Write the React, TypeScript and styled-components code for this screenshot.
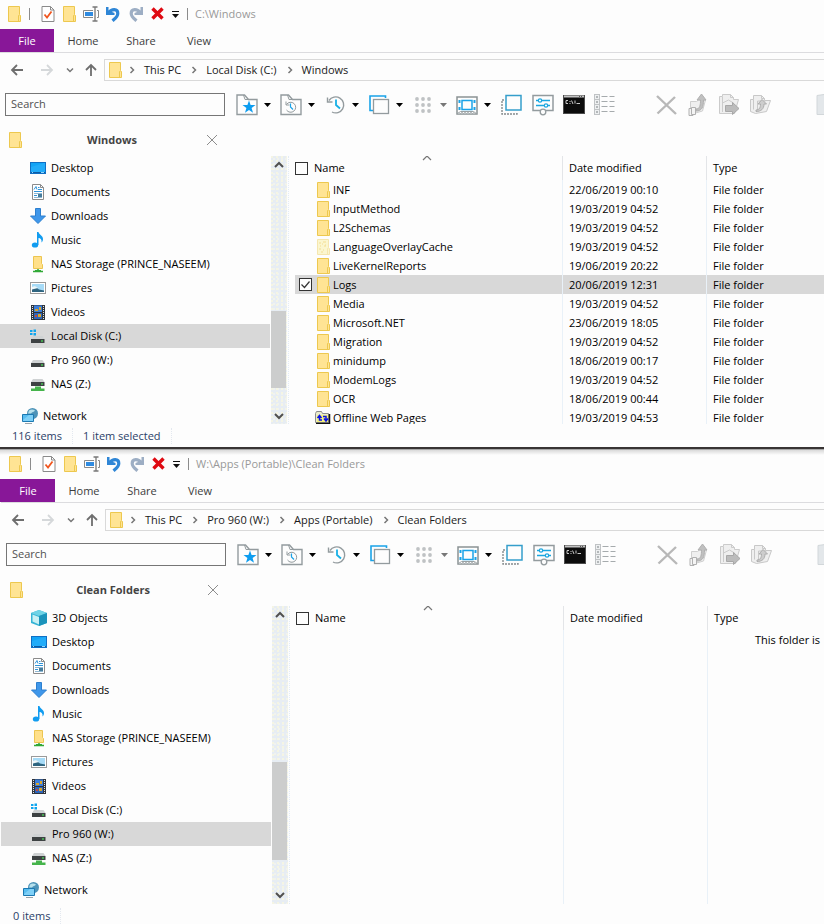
import React from "react";
import styled, { createGlobalStyle } from "styled-components";

const GlobalStyle = createGlobalStyle`
  *, *::before, *::after { box-sizing: border-box; }
  body {
    margin: 0;
    background: #fdfdfd;
    color: #000;
    font-family: "Open Sans", "Noto Sans", sans-serif;
    font-size: 11px;
    line-height: 16px;
  }
  button, input { font: inherit; color: inherit; }
  button { background: none; border: 0; padding: 0; }
  svg { display: block; flex: none; overflow: visible; }
`;

/* ---------- layout ---------- */

const Desktop = styled.main`
  display: flex;
  flex-direction: column;
  height: 100vh;
  overflow: hidden;
`;

const Divider = styled.div`
  flex: none;
  height: 3px;
  border-top: 2px solid #383434;
  background: #a8a8a8;
`;

const Explorer = styled.section<{ $fill?: boolean }>`
  display: flex;
  flex-direction: column;
  flex: ${(p) => (p.$fill ? "1 1 0" : "none")};
  min-height: 0;
  padding-left: ${(p) => (p.$fill ? "1px" : "0")};
  background: ${(p) =>
    p.$fill ? "linear-gradient(#d9d9d9, #fdfdfd 5px)" : "#fdfdfd"};
`;

const TitleBar = styled.header`
  display: flex;
  flex: none;
  align-items: center;
  height: 29px;
  padding: 0 8px 2px;
`;

const QuickButton = styled.button<{ $gap: number }>`
  margin-right: ${(p) => p.$gap}px;
`;

const Separator = styled.span<{ $gap: number }>`
  width: 1px;
  height: 12px;
  margin-right: ${(p) => p.$gap}px;
  background: #8c8c8c;
`;

const WindowTitle = styled.h1`
  margin: 0;
  color: #999;
  font-size: 11px;
  font-weight: 400;
`;

const Ribbon = styled.nav`
  display: flex;
  flex: none;
  height: 24px;
  border-bottom: 1px solid #dcdcdf;
`;

const RibbonTab = styled.button<{ $file?: boolean }>`
  width: ${(p) => (p.$file ? "54px" : "58px")};
  color: ${(p) => (p.$file ? "#fff" : "#3c3c3c")};
  background: ${(p) => (p.$file ? "#881798" : "none")};
  box-shadow: ${(p) => (p.$file ? "-1px 0 #881798" : "none")};
`;

const NavRow = styled.div`
  display: flex;
  flex: none;
  align-items: center;
  height: 34px;
  padding-left: 10px;
`;

const NavButton = styled.button<{ $gap: number }>`
  margin-right: ${(p) => p.$gap}px;
`;

const AddressBar = styled.div`
  display: flex;
  flex: 1;
  align-items: center;
  gap: 7px;
  height: 22px;
  padding-left: 4px;
  border: 1px solid #d9d9d9;
  border-right: 0;
`;

const Crumbs = styled.ol`
  display: flex;
  margin: 0;
  padding: 0;
  list-style: none;
`;

const Crumb = styled.li`
  display: flex;
  align-items: center;
  gap: 9px;
  padding-right: 10px;
`;

const CrumbLink = styled.a`
  color: #1a1a1a;
  text-decoration: none;
  white-space: nowrap;
`;

const ToolRow = styled.div`
  display: flex;
  flex: none;
  align-items: center;
  height: 35px;
  padding-left: 5px;
  overflow: hidden;
`;

const SearchBox = styled.input`
  flex: none;
  width: 220px;
  height: 23px;
  margin-right: 11px;
  padding: 0 5px 2px;
  border: 1px solid #767676;
  border-radius: 0;
  background: #fdfdfd;
  outline: 0;
  &::placeholder { color: #505050; opacity: 1; }
`;

const SplitTool = styled.button`
  display: flex;
  flex: none;
  align-items: center;
  gap: 4px;
  width: 44px;
`;

const Tool = styled.button`
  flex: none;
  width: 31px;
`;

const ToolGap = styled.span<{ $wide?: boolean }>`
  flex: none;
  width: ${(p) => (p.$wide ? "37px" : "31px")};
`;

const FolderTab = styled.div`
  display: flex;
  flex: none;
  align-items: center;
  width: 226px;
  height: 34px;
  padding: 2px 9px 0 9px;
`;

const FolderTabTitle = styled.h2`
  flex: 1;
  margin: 0;
  padding-right: 5px;
  color: #444;
  font-size: 11px;
  font-weight: 700;
  text-align: center;
`;

const Body = styled.div<{ $fill?: boolean }>`
  display: grid;
  grid-template-columns: 270px 18px 1fr;
  gap: 0 1px;
  flex: ${(p) => (p.$fill ? "1 1 0" : "none")};
  min-height: 0;
  height: ${(p) => (p.$fill ? "auto" : "268px")};
`;

const Tree = styled.ul`
  margin: 0;
  padding: 0;
  list-style: none;
  overflow: hidden;
`;

const TreeItem = styled.li<{ $root?: boolean; $selected?: boolean }>`
  display: flex;
  align-items: center;
  gap: 5px;
  height: 24px;
  margin-top: ${(p) => (p.$root ? "8px" : "0")};
  padding-left: ${(p) => (p.$root ? "22px" : "30px")};
  background: ${(p) => (p.$selected ? "#d8d8d8" : "transparent")};
`;

const ScrollBar = styled.div`
  display: flex;
  flex-direction: column;
  padding-right: 1px;
  border-right: 1px dotted #e3ecf5;
`;

const Track = styled.div`
  display: flex;
  flex: 1;
  flex-direction: column;
  background:
    radial-gradient(circle at 1px 1px, #f5f5e4 1px, transparent 1px) 0 0 / 5px 4px,
    radial-gradient(circle at 1px 1px, #f1f3ee 1px, transparent 1px) 2px 2px / 4px 5px,
    #e7edf3;
`;

const ScrollButton = styled.button`
  display: flex;
  flex: none;
  align-items: center;
  justify-content: center;
  height: 17px;
`;

const ScrollSpace = styled.span<{ $grow: number }>`
  flex: ${(p) => p.$grow} 1 0;
`;

const Thumb = styled.div<{ $grow: number }>`
  flex: ${(p) => p.$grow} 1 0;
  margin-right: 1px;
  background: #cccdcd;
`;

const ListPane = styled.div`
  display: flex;
  flex-direction: column;
  min-width: 0;
  padding-left: 5px;
  overflow: hidden;
`;

const FileTable = styled.table`
  width: 100%;
  flex: none;
  border-collapse: separate;
  border-spacing: 0;
  table-layout: fixed;
`;

const HeadCell = styled.th<{ $width?: number }>`
  position: relative;
  width: ${(p) => (p.$width ? `${p.$width}px` : "auto")};
  height: 24px;
  padding: 0 0 0 6px;
  border-left: 1px solid #e3e5e8;
  font-weight: 400;
  text-align: left;
  &:first-child { padding: 0; border-left: 0; }
`;

const SortMark = styled.span`
  position: absolute;
  top: -2px;
  left: 128px;
`;

const Row = styled.tr<{ $selected?: boolean }>`
  background: ${(p) => (p.$selected ? "#d8d8d8" : "transparent")};
`;

const Cell = styled.td`
  height: 19px;
  padding: 0 0 0 6px;
  border-left: 1px solid #e9f1f8;
  white-space: nowrap;
  &:first-child { padding: 0 0 0 4px; border-left: 0; }
`;

const NameBox = styled.label`
  display: flex;
  align-items: center;
`;

const Check = styled.input<{ $hidden?: boolean; $gap: number }>`
  appearance: none;
  flex: none;
  width: 13px;
  height: 13px;
  margin: 0 ${(p) => p.$gap}px 0 0;
  border: 1px solid #333;
  background: #fdfdfd;
  opacity: ${(p) => (p.$hidden ? 0 : 1)};
  &:checked {
    background: #fdfdfd
      url("data:image/svg+xml,%3Csvg xmlns='http://www.w3.org/2000/svg' viewBox='0 0 11 11'%3E%3Cpath d='M1.5 5.5l3 3 5-6' fill='none' stroke='%23333' stroke-width='1.2'/%3E%3C/svg%3E");
  }
`;

const IconSlot = styled.span`
  display: flex;
  justify-content: flex-end;
  width: 15px;
  margin-right: 3px;
`;

const EmptyArea = styled.div`
  display: grid;
  flex: 1;
  grid-template-columns: 267px 144px 1fr;
`;

const EmptyColumn = styled.div`
  border-left: 1px solid #e9f1f8;
  &:first-child { border-left: 0; }
`;

const EmptyNote = styled.p`
  margin: 2px 0 0 47px;
  white-space: nowrap;
`;

const StatusBar = styled.footer<{ $fill?: boolean }>`
  display: flex;
  flex: none;
  height: ${(p) => (p.$fill ? "20px" : "23px")};
  padding: 4px 0 0 12px;
  color: #2c3f68;
`;

const StatusItem = styled.span`
  height: 16px;
  margin-right: 10px;
  padding-right: 10px;
  border-right: 1px dotted #e3e8ef;
`;

/* ---------- icons ---------- */

const FolderIcon = ({ faded = false }: { faded?: boolean }) => (
  <svg width="13" height="16" viewBox="0 0 13 16">
    <path d="M.5.5h11v8l1 1v6H.5z" fill={faded ? "#fbf6cf" : "#ffe494"} stroke={faded ? "#f5e6ae" : "#edc84f"} />
    <path d="M10.5 15.5V9.5h1" fill="none" stroke={faded ? "#f5e6ae" : "#edc84f"} />
    {faded && <path d="M2 4h2m2-1h3M3 7h1m3 0h2M2 10h2m2 1h1M4 13h2m2-7h1M5 5h1" stroke="#f3dd92" />}
  </svg>
);

const PropertiesIcon = () => (
  <svg width="14" height="16" viewBox="0 0 14 16">
    <path d="M1 .5h8.500l3.500 3.500v11.500H1z" fill="#fff" stroke="#8a8a8a" />
    <path d="M9.500.5v3.500H13" fill="none" stroke="#8a8a8a" />
    <path d="M3.500 8.500l2.500 3 4.500-6" fill="none" stroke="#f0561f" strokeWidth="1.800" />
  </svg>
);

const RenameIcon = () => (
  <svg width="16" height="16" viewBox="0 0 16 16">
    <path d="M10 4.500H.5v7H10M14 4.500h1.500v7H14" fill="none" stroke="#888" />
    <rect x="2" y="6" width="8" height="4" fill="#2e8ae0" />
    <path d="M9.500 1h5M9.500 15h5M12 1v14" fill="none" stroke="#777" strokeWidth="1.300" />
  </svg>
);

const TurnIcon = ({ color, flip = false }: { color: string; flip?: boolean }) => (
  <svg width="14" height="16" viewBox="0 0 14 16">
    <g transform={flip ? "translate(14 0) scale(-1 1)" : undefined}>
      <path d="M3 6.500C5.500 2.800 11.800 2.300 11.800 7.500c0 3.200-2.600 5-5.300 7.300" fill="none" stroke={color} strokeWidth="3.200" />
      <path d="M0 1h2.500v3.500L8.500 7v2H0z" fill={color} />
    </g>
  </svg>
);

const RedCross = () => (
  <svg width="13" height="13" viewBox="0 0 13 13">
    <path d="M1.500 1.500l10 10M11.500 1.500l-10 10" stroke="#df0a12" strokeWidth="3.400" />
  </svg>
);

const MoreIcon = () => (
  <svg width="7" height="8" viewBox="0 0 7 8">
    <path d="M0 1.500h7" stroke="#111" />
    <path d="M0 4h7L3.500 8z" fill="#111" />
  </svg>
);

const ArrowIcon = ({ kind }: { kind: "left" | "right" | "up" }) => {
  const turn = { left: 0, up: 90, right: 180 }[kind];
  return (
    <svg width="14" height="14" viewBox="0 0 14 14">
      <path
        d="M13 7H2M7 2L2 7l5 5"
        fill="none"
        stroke={kind === "right" ? "#d5d8da" : "#6e6e6e"}
        strokeWidth="1.800"
        transform={`rotate(${turn} 7 7)`}
      />
    </svg>
  );
};

const Chevron = ({ dir, size = 6, color = "#777", width = 1.5 }: { dir: "right" | "down" | "up"; size?: number; color?: string; width?: number }) => {
  const turn = { right: 0, down: 90, up: -90 }[dir];
  return (
    <svg width={size} height={size} viewBox="0 0 6 6">
      <path d="M1.500 0l3 3-3 3" fill="none" stroke={color} strokeWidth={width} transform={`rotate(${turn} 3 3)`} />
    </svg>
  );
};

const Caret = ({ color = "#000" }: { color?: string }) => (
  <svg width="7" height="4" viewBox="0 0 7 4">
    <path d="M0 0h7L3.500 4z" fill={color} />
  </svg>
);

const CloseIcon = () => (
  <svg width="10" height="10" viewBox="0 0 10 10">
    <path d="M0 0l10 10M10 0L0 10" stroke="#8d8d8d" />
  </svg>
);

type ToolName =
  | "favourite" | "recent" | "history" | "copies" | "grid" | "slides"
  | "select" | "options" | "terminal" | "details"
  | "delete" | "moveUp" | "moveTo" | "copyTo" | "paste";

const folderOutline = "M1 21.500V2h7.500l4 4.500h8.500v15z";
const blue = "#1aa3e8";
const steel = "#939b9e";

const toolArt: Record<ToolName, React.ReactNode> = {
  favourite: (
    <>
      <path d={folderOutline} fill="none" stroke={steel} strokeWidth="1.400" />
      <path d="M7.500 2l1.500 4.500h4" fill="none" stroke={steel} />
      <path d="M13 7.500l1.600 4.500h4.900l-3.900 3 1.400 4.800-4-2.900-4 2.900 1.400-4.800-3.900-3h4.900z" fill="#0d9df0" />
    </>
  ),
  recent: (
    <>
      <path d={folderOutline} fill="none" stroke={steel} strokeWidth="1.400" />
      <path d="M7.500 2l1.500 4.500h4" fill="none" stroke={steel} />
      <path d="M6.500 11.500a5 5 0 1 1 0 5.500M6 8.500v3.500h3.500" fill="none" stroke={steel} />
      <path d="M10.500 10.500V14l2.500 2.500" fill="none" stroke={blue} strokeWidth="1.200" />
    </>
  ),
  history: (
    <>
      <path d="M5 7.500a8 8 0 1 1 3 11.500M3.500 4.500V9h5" fill="none" stroke={steel} strokeWidth="1.400" />
      <path d="M12 6.500V12l4 3.500" fill="none" stroke="#18b0e6" strokeWidth="1.800" />
    </>
  ),
  copies: (
    <>
      <path d="M17.500 5V3H2v14.500h3" fill="none" stroke={blue} strokeWidth="1.600" />
      <rect x="5.500" y="6.500" width="15" height="14" fill="#fdfdfd" stroke={steel} strokeWidth="1.300" />
    </>
  ),
  grid: (
    <g fill="#bfc2c4">
      {[6, 12, 18].map((y) => [5, 11, 17, 17].map((x, i) => i < 3 && <circle key={`${x}-${y}`} cx={x} cy={y} r="1.900" />))}
    </g>
  ),
  slides: (
    <>
      <rect x="1" y="4" width="20" height="17" fill="none" stroke="#8b9294" strokeWidth="1.500" />
      <path d="M1 21l3.500-2.500h13L21 21" fill="none" stroke="#9ba1a3" />
      <path d="M2 20h18" stroke="#b9bec0" strokeWidth="2" strokeDasharray="2 1" />
      <rect x="6" y="7.500" width="10" height="9" fill="#fdfdfd" stroke={blue} strokeWidth="1.500" />
      <path d="M3.500 7v3m0 4v3m15-10v3m0 4v3" stroke={blue} strokeWidth="2" />
    </>
  ),
  select: (
    <>
      <path d="M4 7H2v14h15v-2" fill="none" stroke="#858b8d" strokeDasharray="2 1" strokeWidth="1.400" />
      <rect x="6" y="2.500" width="15" height="14.500" fill="#fdfdfd" stroke="#359ecb" strokeWidth="1.500" />
    </>
  ),
  options: (
    <>
      <path d="M9 17.500H2V2.500h20v15h-7" fill="none" stroke={steel} strokeWidth="1.500" />
      <circle cx="12" cy="19" r="2.800" fill="#fdfdfd" stroke={steel} strokeWidth="1.300" />
      <path d="M5 7.500h14M5 12.500h14" stroke="#19a6e0" strokeWidth="1.500" />
      <circle cx="9" cy="7.500" r="1.700" fill="#fdfdfd" stroke="#19a6e0" strokeWidth="1.200" />
      <circle cx="15" cy="12.500" r="1.700" fill="#fdfdfd" stroke="#19a6e0" strokeWidth="1.200" />
    </>
  ),
  terminal: (
    <>
      <rect x="1.500" y="2.500" width="21" height="18" fill="#0c0c0c" stroke="#4c4c4c" />
      <path d="M2 3.500h20" stroke="#c4c4c4" strokeWidth="2" />
      <path d="M17 3.500h1m1 0h1" stroke="#555" />
      <path d="M6 7.500H4v3h2M8 8v1m0 1v1M9.500 7.500l1.500 3.500M13 7.500v3M14.500 10.500H18" fill="none" stroke="#c8c8c8" />
    </>
  ),
  details: (
    <>
      <rect x="1.500" y="1.500" width="5" height="20" fill="#eef0f1" stroke="#c0c3c5" />
      {[4, 9, 14, 19].map((y) => (
        <React.Fragment key={y}>
          <rect x="3" y={y - 1} width="2" height="2" fill="#b4b8ba" />
          <path d={`M1.500 ${y + 2.5}h5`} stroke="#c0c3c5" />
          <path d={`M8.500 ${y - 0.5}h6m2 0h5`} stroke="#a6abad" />
        </React.Fragment>
      ))}
    </>
  ),
  delete: <path d="M2 3l19 18M20 4L2.500 20.500" stroke="#b8b8b8" strokeWidth="2.400" />,
  moveUp: (
    <g stroke="#cfcfcf">
      <path d="M4.500 8.500h6l2-1.500h7l-3 11-7 2h-5z" fill="#efefef" />
      <path d="M10 16c4 0 4.500-4 4.500-9H11l4.500-6L20 7h-2.500c0 7-1.500 11-7.500 11z" fill="#c0c0c0" stroke="#b0b0b0" />
      <path d="M3 15.500h4v7H3z" fill="#f4f4f4" stroke="#b0b0b0" />
      <path d="M5.500 14.500h4v7h-4z" fill="#f4f4f4" stroke="#b0b0b0" />
    </g>
  ),
  moveTo: (
    <g stroke="#cbcbcb">
      <path d="M2.500 20.500V3.500h3v-2h8l3 3v2h5l-4 14z" fill="#efefef" />
      <path d="M5.500 19V4M13.500 1.500v3h3M5.500 10l6-3 5 3" fill="none" />
      <path d="M8.500 12.500h7v-3l6.500 6-6.500 6v-3h-7z" fill="#bcbcbc" stroke="#a8a8a8" />
    </g>
  ),
  copyTo: (
    <g stroke="#c8c8c8">
      <path d="M2.500 6.500h3v-4h8l3 3v2h6l-4 11-11 2-5-2z" fill="#efefef" />
      <path d="M5.500 6.500v10M9.500 18v-10h8M13.500 2.500v3h3" fill="none" />
      <path d="M8 17c3 0 4.500-2 4.500-6H10l4-4.500 4.500 4.500H16c0 5-3 7.500-8 7.500z" fill="#cdcdcd" stroke="#adadad" />
    </g>
  ),
  paste: <path d="M1 2.500l7-1h15v20H1z" fill="#e3e7ea" stroke="#d2d7da" />,
};

const ToolIcon = ({ name }: { name: ToolName }) => (
  <svg width="24" height="24" viewBox="0 0 24 24">{toolArt[name]}</svg>
);

type PlaceName =
  | "cube" | "desktop" | "document" | "download" | "music" | "nasFolder"
  | "picture" | "video" | "system" | "drive" | "nas" | "network";

const driveBody = (
  <>
    <path d="M3 8h9.500l2 3H1z" fill="#cfd2d3" />
    <rect x="1" y="11" width="13.500" height="4" fill="#3e4243" />
    <rect x="11" y="12.500" width="2" height="1" fill="#4bff5d" />
  </>
);

const placeArt: Record<PlaceName, React.ReactNode> = {
  cube: (
    <>
      <path d="M8 0l8 3v10l-8 3-8-3V3z" fill="#35b4d6" />
      <path d="M0 3l8-3 8 3-8 3z" fill="#6fd3e6" />
      <path d="M1.500 4.500L8 7v7.500l-6.500-3z" fill="#c8f0f4" />
      <path d="M8 6l8-3v10l-8 3z" fill="#1b93bb" />
    </>
  ),
  desktop: (
    <>
      <rect x=".5" y="2.500" width="15" height="11" fill="#12a4f6" stroke="#0f6fc4" />
      <path d="M1 12V7l13-4h1v9z" fill="#22acf9" />
      <path d="M1 12.500h14" stroke="#0d5ba3" />
      <path d="M2 12.500h1m8 0h3" stroke="#8ed5ff" />
    </>
  ),
  document: (
    <>
      <path d="M2.500.5h8l3 3v12h-11z" fill="#fff" stroke="#8b8b8b" />
      <path d="M10.500.5v3h3" fill="none" stroke="#8b8b8b" />
      <path d="M4 5.500l2-3 1 3M8 3.500h1.500M8 5.500h4M4 7.500h8M4 11.500h3" fill="none" stroke="#2f93d8" />
      <path d="M4 9.500h8M4 13.500h8" stroke="#8fb7d2" />
      <rect x="8" y="10" width="4" height="3" fill="#477c9b" />
    </>
  ),
  download: <path d="M5.500.5h5v7.500h5l-7.500 7.500L.5 8h5z" fill="#3f97ea" stroke="#2c7fcf" />,
  music: (
    <>
      <ellipse cx="5" cy="13" rx="3.200" ry="2.600" fill="#119cf0" />
      <path d="M7 0h1.500c.5 3 4.500 3.500 4.500 7 0 1.500-.5 2.500-1.500 3.500C12 7.500 10.500 6 8.500 6v7H7z" fill="#119cf0" />
    </>
  ),
  nasFolder: (
    <>
      <path d="M3.500.5h8v7l1 1v4h-9z" fill="#ffe08a" stroke="#ecc550" />
      <path d="M8 13v2M3 15.500h10" stroke="#31a936" strokeWidth="1.500" />
      <path d="M5 14.500h6" stroke="#31a936" />
    </>
  ),
  picture: (
    <>
      <rect x=".5" y="2.500" width="15" height="11" fill="#fff" stroke="#9a9a9a" />
      <rect x="2" y="4" width="12" height="8" fill="#a7dbf7" />
      <path d="M2 12V8.500l3-2 4 3 5 1V12z" fill="#2f6580" />
      <path d="M2 7l3-1 3 2-6 1.500z" fill="#eef7fa" />
    </>
  ),
  video: (
    <>
      <rect x="1" y="1" width="14" height="15" fill="#30353c" />
      <rect x="4" y="1.500" width="8" height="6.500" fill="#3b7edb" />
      <rect x="4" y="9" width="8" height="6" fill="#2e66bb" />
      <path d="M5 5h3v2H5zM9 3h2v3H9zM8 10h3v3H8z" fill="#d8a52c" />
      <path d="M2.500 2v13M13.500 2v13" stroke="#dfe3e6" strokeDasharray="1 1" />
      <path d="M5 12h2" stroke="#c34a38" strokeWidth="2" />
    </>
  ),
  system: (
    <>
      <path d="M0 2h2.500v2H0zM3.500 1.500H6V4H3.500zM0 5h2.500v2H0zM3.500 5H6v2.500H3.500z" fill="#0fa5ee" />
      {driveBody}
    </>
  ),
  drive: driveBody,
  nas: (
    <>
      <path d="M3 3h9.500l2 3H1z" fill="#cfd2d3" />
      <rect x="1" y="6" width="13.500" height="4" fill="#3e4243" />
      <rect x="11" y="7.500" width="2" height="1" fill="#4bff5d" />
      <path d="M5 10.500h6v2h3.500V15H1v-2.500h4z" fill="#45b44b" />
    </>
  ),
  network: (
    <>
      <circle cx="10.500" cy="5.500" r="5.500" fill="#4d93b8" />
      <path d="M7 2.500c2-1.500 4-1.500 6 0-1 2-3 1-4 3H6z" fill="#b6e0ec" />
      <path d="M.5 6.500h11v7H.5z" fill="#58bdf0" stroke="#1c79b2" />
      <path d="M1 12l6-5h4v6H1z" fill="#7fd0f7" />
      <path d="M3 15.500h7" stroke="#9aa4aa" />
    </>
  ),
};

const PlaceIcon = ({ name }: { name: PlaceName }) => (
  <svg width="16" height="16" viewBox="0 0 16 16">{placeArt[name]}</svg>
);

const OfflineIcon = () => (
  <svg width="15" height="13" viewBox="0 0 15 13">
    <path d="M.5 11.500v-9l1-2h5l1 2h6v9z" fill="#eaeccb" stroke="#8c8c8c" />
    <path d="M1 12.500h13.500V3" fill="none" stroke="#111" strokeWidth="1.500" />
    <rect x="2" y="4" width="11" height="7" fill="#f4f07c" />
    <path d="M4.500 5v4H7M2.500 7l2-2.500 2 2.500M8 5.500h3V9M9 7.500l2 2.500 2-2.500" fill="none" stroke="#0a12e6" strokeWidth="1.500" />
  </svg>
);

/* ---------- data ---------- */

type Place = { label: string; icon: PlaceName };
type FileEntry = { name: string; date: string; look?: "faded" | "offline" };

const places: Place[] = [
  { label: "3D Objects", icon: "cube" },
  { label: "Desktop", icon: "desktop" },
  { label: "Documents", icon: "document" },
  { label: "Downloads", icon: "download" },
  { label: "Music", icon: "music" },
  { label: "NAS Storage (PRINCE_NASEEM)", icon: "nasFolder" },
  { label: "Pictures", icon: "picture" },
  { label: "Videos", icon: "video" },
  { label: "Local Disk (C:)", icon: "system" },
  { label: "Pro 960 (W:)", icon: "drive" },
  { label: "NAS (Z:)", icon: "nas" },
  { label: "Network", icon: "network" },
];

const windowsFiles: FileEntry[] = [
  { name: "INF", date: "22/06/2019 00:10" },
  { name: "InputMethod", date: "19/03/2019 04:52" },
  { name: "L2Schemas", date: "19/03/2019 04:52" },
  { name: "LanguageOverlayCache", date: "19/03/2019 04:52", look: "faded" },
  { name: "LiveKernelReports", date: "19/06/2019 20:22" },
  { name: "Logs", date: "20/06/2019 12:31" },
  { name: "Media", date: "19/03/2019 04:52" },
  { name: "Microsoft.NET", date: "23/06/2019 18:05" },
  { name: "Migration", date: "19/03/2019 04:52" },
  { name: "minidump", date: "18/06/2019 00:17" },
  { name: "ModemLogs", date: "19/03/2019 04:52" },
  { name: "OCR", date: "18/06/2019 00:44" },
  { name: "Offline Web Pages", date: "19/03/2019 04:53", look: "offline" },
];

const splitTools: ToolName[] = ["favourite", "recent", "history", "copies", "grid", "slides"];
const viewTools: ToolName[] = ["select", "options", "terminal", "details"];
const fileTools: ToolName[] = ["delete", "moveUp", "moveTo", "copyTo"];

/* ---------- window ---------- */

type ExplorerProps = {
  path: string;
  crumbs: string[];
  title: string;
  tree: Place[];
  activePlace: string;
  files: FileEntry[];
  selectedFile?: string;
  scroll: [number, number, number];
  status: string[];
  fill?: boolean;
};

function ExplorerWindow(props: ExplorerProps) {
  const { path, crumbs, title, tree, activePlace, files, selectedFile, scroll, status, fill } = props;
  return (
    <Explorer $fill={fill} aria-label={path}>
      <TitleBar>
        <QuickButton $gap={8} aria-label="Window menu"><FolderIcon /></QuickButton>
        <Separator $gap={11} />
        <QuickButton $gap={8} aria-label="Properties"><PropertiesIcon /></QuickButton>
        <QuickButton $gap={7} aria-label="New folder"><FolderIcon /></QuickButton>
        <QuickButton $gap={7} aria-label="Rename"><RenameIcon /></QuickButton>
        <QuickButton $gap={9} aria-label="Undo"><TurnIcon color="#2f86d6" /></QuickButton>
        <QuickButton $gap={8} aria-label="Redo"><TurnIcon color="#9daec4" flip /></QuickButton>
        <QuickButton $gap={8} aria-label="Delete"><RedCross /></QuickButton>
        <QuickButton $gap={8} aria-label="Customise toolbar"><MoreIcon /></QuickButton>
        <Separator $gap={7} />
        <WindowTitle>{path}</WindowTitle>
      </TitleBar>

      <Ribbon>
        <RibbonTab $file>File</RibbonTab>
        {["Home", "Share", "View"].map((t) => <RibbonTab key={t}>{t}</RibbonTab>)}
      </Ribbon>

      <NavRow>
        <NavButton $gap={16} aria-label="Back"><ArrowIcon kind="left" /></NavButton>
        <NavButton $gap={13} aria-label="Forward"><ArrowIcon kind="right" /></NavButton>
        <NavButton $gap={11} aria-label="Recent locations"><Chevron dir="down" /></NavButton>
        <NavButton $gap={6} aria-label="Up"><ArrowIcon kind="up" /></NavButton>
        <AddressBar>
          <FolderIcon />
          <Crumbs>
            {crumbs.map((c) => (
              <Crumb key={c}>
                <Chevron dir="right" />
                <CrumbLink href="#">{c}</CrumbLink>
              </Crumb>
            ))}
          </Crumbs>
        </AddressBar>
      </NavRow>

      <ToolRow>
        <SearchBox type="text" placeholder="Search" aria-label="Search" />
        {splitTools.map((name) => (
          <SplitTool key={name} aria-label={name}>
            <ToolIcon name={name} />
            <Caret color={name === "grid" ? "#777" : "#000"} />
          </SplitTool>
        ))}
        {viewTools.map((name) => <Tool key={name} aria-label={name}><ToolIcon name={name} /></Tool>)}
        <ToolGap />
        {fileTools.map((name) => <Tool key={name} aria-label={name}><ToolIcon name={name} /></Tool>)}
        <ToolGap $wide />
        <Tool aria-label="paste"><ToolIcon name="paste" /></Tool>
      </ToolRow>

      <FolderTab>
        <FolderIcon />
        <FolderTabTitle>{title}</FolderTabTitle>
        <button aria-label="Close tab"><CloseIcon /></button>
      </FolderTab>

      <Body $fill={fill}>
        <Tree>
          {tree.map((p) => (
            <TreeItem key={p.label} $root={p.icon === "network"} $selected={p.label === activePlace}>
              <PlaceIcon name={p.icon} />
              {p.label}
            </TreeItem>
          ))}
        </Tree>
        <ScrollBar>
          <Track>
            <ScrollButton aria-label="Scroll up"><Chevron dir="up" size={8} color="#505050" /></ScrollButton>
            <ScrollSpace $grow={scroll[0]} />
            <Thumb $grow={scroll[1]} />
            <ScrollSpace $grow={scroll[2]} />
            <ScrollButton aria-label="Scroll down"><Chevron dir="down" size={8} color="#505050" /></ScrollButton>
          </Track>
        </ScrollBar>
        <ListPane>
          <FileTable>
            <thead>
              <tr>
                <HeadCell $width={267}>
                  <NameBox><Check type="checkbox" $gap={6} />Name</NameBox>
                  <SortMark><Chevron dir="up" size={8} color="#777" width={0.9} /></SortMark>
                </HeadCell>
                <HeadCell $width={144}>Date modified</HeadCell>
                <HeadCell>Type</HeadCell>
              </tr>
            </thead>
            <tbody>
              {files.map((f) => {
                const selected = f.name === selectedFile;
                return (
                  <Row key={f.name} $selected={selected}>
                    <Cell>
                      <NameBox>
                        <Check type="checkbox" $gap={3} $hidden={!selected} defaultChecked={selected} />
                        <IconSlot>
                          {f.look === "offline" ? <OfflineIcon /> : <FolderIcon faded={f.look === "faded"} />}
                        </IconSlot>
                        {f.name}
                      </NameBox>
                    </Cell>
                    <Cell>{f.date}</Cell>
                    <Cell>File folder</Cell>
                  </Row>
                );
              })}
            </tbody>
          </FileTable>
          {files.length === 0 && (
            <EmptyArea>
              <EmptyColumn />
              <EmptyColumn />
              <EmptyColumn><EmptyNote>This folder is</EmptyNote></EmptyColumn>
            </EmptyArea>
          )}
        </ListPane>
      </Body>

      <StatusBar $fill={fill}>
        {status.map((s) => <StatusItem key={s}>{s}</StatusItem>)}
      </StatusBar>
    </Explorer>
  );
}

export default function App() {
  return (
    <>
      <GlobalStyle />
      <Desktop>
        <ExplorerWindow
          path="C:\Windows"
          crumbs={["This PC", "Local Disk (C:)", "Windows"]}
          title="Windows"
          tree={places.slice(1)}
          activePlace="Local Disk (C:)"
          files={windowsFiles}
          selectedFile="Logs"
          scroll={[139, 77, 19]}
          status={["116 items", "1 item selected"]}
        />
        <Divider />
        <ExplorerWindow
          path="W:\Apps (Portable)\Clean Folders"
          crumbs={["This PC", "Pro 960 (W:)", "Apps (Portable)", "Clean Folders"]}
          title="Clean Folders"
          tree={places}
          activePlace="Pro 960 (W:)"
          files={[]}
          scroll={[140, 98, 27]}
          status={["0 items"]}
          fill
        />
      </Desktop>
    </>
  );
}
